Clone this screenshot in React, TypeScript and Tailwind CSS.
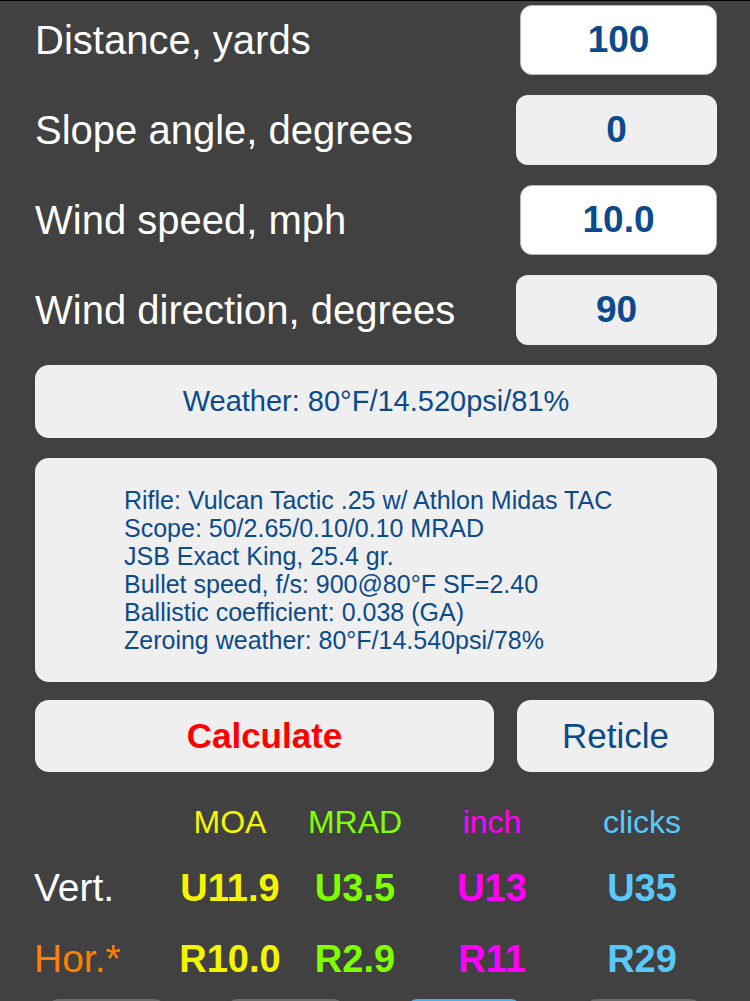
import React from "react";

const font = { fontFamily: '"Liberation Sans", Arial, sans-serif' };

function InputRow({ label, value, white }: { label: string; value: string; white?: boolean }) {
  return (
    <div className="flex h-[70px] items-center justify-between">
      <div className="text-[40px] leading-none text-white">{label}</div>
      <div
        className={
          white
            ? "flex h-full w-[197px] items-center justify-center rounded-[12px] border border-[#b5b5b5] bg-white text-[37px] font-bold text-[#0b4a8b]"
            : "flex h-full w-[201px] items-center justify-center rounded-[12px] bg-[#efefef] text-[37px] font-bold text-[#0b4a8b]"
        }
      >
        {value}
      </div>
    </div>
  );
}

export default function App() {
  const info = [
    "Rifle: Vulcan Tactic .25 w/ Athlon Midas TAC",
    "Scope: 50/2.65/0.10/0.10 MRAD",
    "JSB Exact King, 25.4 gr.",
    "Bullet speed, f/s: 900@80°F SF=2.40",
    "Ballistic coefficient: 0.038 (GA)",
    "Zeroing weather: 80°F/14.540psi/78%",
  ];
  return (
    <div style={font} className="min-h-[1001px] w-[750px] bg-[#414141]">
      <div className="h-px bg-black" />
      <div className="flex flex-col gap-[20px] pl-[35px] pr-[33px] pt-[4px]">
        <InputRow label="Distance, yards" value="100" white />
        <InputRow label="Slope angle, degrees" value="0" />
        <InputRow label="Wind speed, mph" value="10.0" white />
        <InputRow label="Wind direction, degrees" value="90" />
        <div className="flex h-[73px] items-center justify-center rounded-[14px] bg-[#efefef] text-[29px] text-[#0b4a8b]">
          Weather: 80°F/14.520psi/81%
        </div>
        <div className="flex h-[224px] flex-col justify-center rounded-[14px] bg-[#efefef] pl-[89px] text-[25px] leading-[28px] text-[#0b4a8b]">
          {info.map((l) => (
            <div key={l}>{l}</div>
          ))}
        </div>
      </div>
      <div className="mt-[18px] flex gap-[23px] pl-[35px] pr-[36px]">
        <div className="flex h-[72px] w-[459px] items-center justify-center rounded-[14px] bg-[#efefef] text-[35px] font-bold text-[#ff0000]">
          Calculate
        </div>
        <div className="flex h-[72px] flex-1 items-center justify-center rounded-[14px] bg-[#efefef] text-[35px] text-[#0b4a8b]">
          Reticle
        </div>
      </div>
      <div className="mt-[15px] grid grid-cols-[170px_120px_130px_144px_156px] grid-rows-[70px_62px_80px] items-center text-center">
        <div />
        <div className="text-[32px] text-[#f5f500]">MOA</div>
        <div className="text-[32px] text-[#7fff00]">MRAD</div>
        <div className="text-[32px] text-[#ff00ff]">inch</div>
        <div className="text-[32px] text-[#5ac8fa]">clicks</div>

        <div className="pl-[34px] text-left text-[39px] text-white">Vert.</div>
        <div className="text-[38px] font-bold text-[#f5f500]">U11.9</div>
        <div className="text-[38px] font-bold text-[#7fff00]">U3.5</div>
        <div className="text-[38px] font-bold text-[#ff00ff]">U13</div>
        <div className="text-[38px] font-bold text-[#5ac8fa]">U35</div>

        <div className="pl-[34px] text-left text-[39px] text-[#ff8000]">Hor.*</div>
        <div className="text-[38px] font-bold text-[#f5f500]">R10.0</div>
        <div className="text-[38px] font-bold text-[#7fff00]">R2.9</div>
        <div className="text-[38px] font-bold text-[#ff00ff]">R11</div>
        <div className="text-[38px] font-bold text-[#5ac8fa]">R29</div>
      </div>
      <div className="flex h-[40px] items-start">
        <div className="ml-[48px] h-[40px] w-[117px] rounded-t-[10px] bg-[#6a6a6a]" />
        <div className="ml-[62px] h-[40px] w-[117px] rounded-t-[10px] bg-[#6a6a6a]" />
        <div className="ml-[63px] h-[40px] w-[114px] rounded-t-[10px] bg-[#4ab0e8]" />
        <div className="ml-[65px] h-[40px] w-[115px] rounded-t-[10px] bg-[#6a6a6a]" />
      </div>
    </div>
  );
}
